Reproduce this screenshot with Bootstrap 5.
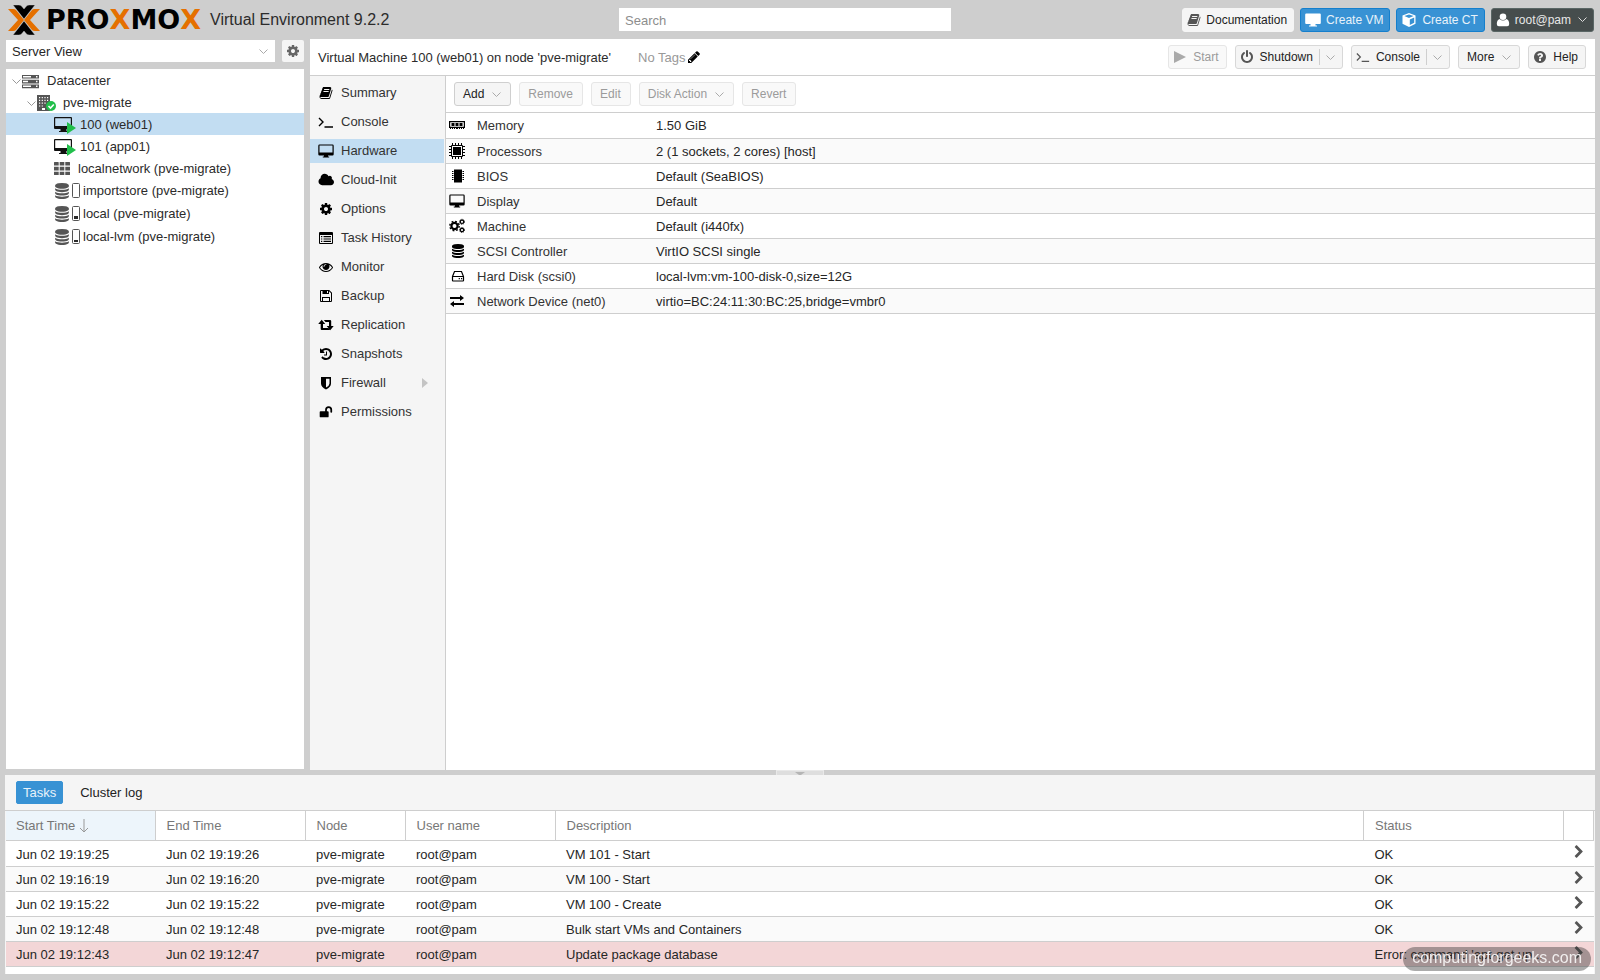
<!DOCTYPE html>
<html lang="en">
<head>
<meta charset="utf-8">
<meta name="viewport" content="width=device-width, initial-scale=1">
<title>pve-migrate - Proxmox Virtual Environment</title>
<link href="https://cdn.jsdelivr.net/npm/bootstrap@5.3.0/dist/css/bootstrap.min.css" rel="stylesheet">
<style>
body{background:#cecece;color:#2b2b2b;font-family:"Liberation Sans",Arial,sans-serif;font-size:13px;line-height:18px}
svg{display:block;flex:none;fill:currentColor}
.ic{width:14px;height:14px}
.ic-s{width:16px;height:16px}
.chev{width:9px;height:9px;fill:none;stroke:#aaa;stroke-width:1}
.topbar{height:39px;padding:0 6px 0 7px}
.wordmark{font:bold 27px/30px "DejaVu Sans",sans-serif;color:#000;padding-left:5px}
.wordmark b{color:#e57000}
.product{font-size:16px;margin-left:9px}
.side-space{flex:612 1 0;min-width:0}
.side-end{flex-grow:643;gap:6px}
.search-box{width:332px;height:23px;border:0;border-radius:0;padding:1px 6px 0;font-size:13px;flex:none}
.search-box::placeholder{color:#8d8d8d}
.tool{--bs-btn-font-size:12px;--bs-btn-line-height:16px;--bs-btn-padding-x:8px;--bs-btn-padding-y:3px;--bs-btn-border-radius:3px;--bs-btn-color:#222;--bs-btn-bg:#f5f5f5;--bs-btn-border-color:#d8d8d8;--bs-btn-hover-bg:#e8e8e8;--bs-btn-disabled-bg:#f9f9f9;--bs-btn-disabled-color:#9b9b9b;--bs-btn-disabled-border-color:#e6e6e6;--bs-btn-disabled-opacity:1;height:24px;display:inline-flex;align-items:center;gap:6px;white-space:nowrap}
.tool .ic,.tool .ic-s{color:#555}
.tool:disabled .ic{color:#aaa}
.tool .chev{margin-left:2px}
.tool .rule+.chev{margin-left:0}
.tool-lead{padding-left:4px}
.topbar .tool{gap:5px;padding-right:6px}
.tool-plain{--bs-btn-border-color:#f5f5f5}
.tool-blue{--bs-btn-bg:#3892d4;--bs-btn-border-color:#157fcc;--bs-btn-color:#e8f2fa;--bs-btn-hover-bg:#2f80bd}
.tool-dark{--bs-btn-bg:#464d4d;--bs-btn-border-color:#5a6665;--bs-btn-color:#e8e8e8;--bs-btn-hover-bg:#333}
.tool-blue .ic-s,.tool-dark .ic{color:#fff}
.tool-dark .chev{stroke:#ddd}
.tool-add{--bs-btn-border-color:#cfcfcf}
.title-bar .tool-lead{padding-right:7px}
.tools .tool{padding-right:9px}
.rule{width:1px;height:16px;background:#cfcfcf}
.work{gap:6px;padding:0 5px 0 6px;flex:1 1 auto}
.left{width:298px;padding:1px 0 1px;gap:7px}
.view-row{gap:7px}
.view-pick{display:grid;align-items:center;flex:1}
.view-pick>*{grid-area:1/1}
.view-pick select{appearance:none;border:0;background:#fff;height:22px;padding:2px 6px 0;color:#262626;width:100%}
.view-pick svg{justify-self:end;margin-right:7px;pointer-events:none}
.gear{width:22px;height:22px;border:0;border-radius:2px;background:#f5f5f5;color:#666}
.tree,.main{background:#fff}
.node{height:22px;white-space:nowrap;padding:2px 0 0 6px}
.node .chev{stroke:#999;margin-right:1px}
.node .pic{color:#555}
.lv1{padding-left:21px}
.lv1 .pic{margin-right:6px}
.lv2{padding-left:48px}
.store{height:23px;gap:2px;padding-top:0}
.picked{background:#c2ddf2}
.title-bar{height:37px;border-bottom:1px solid #cecece;padding:0 9px 0 8px;gap:0 1px}
.title-text{padding-top:1px}
.tags{color:#999;margin-left:26px}
.menu{width:136px;background:#f5f5f5;border-right:1px solid #cecece;padding:5px 1px 0 0}
.menu a{display:flex;align-items:center;height:24px;margin-bottom:5px;padding-left:8px;gap:7px;color:#333;text-decoration:none}
.menu svg{width:16px;height:16px;color:#000}
.menu svg.m{width:14px;height:14px;margin:0 1px}
.menu svg.more{width:6px;height:10px;color:#c4c4c4}
.tools{height:37px;border-bottom:1px solid #cecece;padding:0 8px;gap:8px}
.data-grid{table-layout:fixed;margin:0;--bs-table-bg:transparent}
.data-grid.table>:not(caption)>*>*{padding:2px 0 0 10px;height:25px;border-bottom:1px solid #cecece;box-shadow:none;vertical-align:middle;white-space:nowrap;overflow:hidden;text-overflow:ellipsis;font-weight:400;color:#262626;text-align:left}
.data-grid tbody tr:nth-child(even){background:#fafafa}
.log.table>tbody>tr:first-child>*{height:26px}
.hw.table>:not(caption)>*>*:first-child{padding:0 0 0 3px;color:#000}
.hw.table>:not(caption)>*>*:nth-child(2){padding-left:0;color:#333}
.hw svg{width:16px;height:16px}
.hw svg.m{width:14px;height:14px;margin-left:2px}
.log.table>:not(caption)>*>*:nth-child(n+2){padding-left:11px}
.log.table>thead>tr>*{height:30px!important;color:#777!important;border-right:1px solid #cecece}
.log.table>tbody>tr>*:last-child{padding:0 0 0 8px}
.log .sorted{background:#edf5fb}
.log tbody tr.failed{background:#f3d6d7}
.log td svg{color:#555;margin-bottom:3px}
.splitter{height:5px}
.grip{width:48px;height:5px;border:1px solid #e9e9e9;border-bottom:0;background:#dedede;padding:0}
.bottom{margin:0 5px 6px;background:#f5f5f5}
.tabs{height:36px;padding:0 11px;border-bottom:1px solid #cecece;gap:10px}
.tab{--bs-btn-font-size:13px;--bs-btn-line-height:18px;--bs-btn-padding-x:6px;--bs-btn-padding-y:2px;--bs-btn-border-radius:2px;--bs-btn-color:#222;height:23px}
.tab.on{background:#3892d4;border-color:#3892d4;color:#e8f2fa}
.log-body{background:#fff;margin:0 1px;padding-bottom:7px}
.stamp{position:fixed;right:9px;bottom:9px;height:24px;border-radius:12px;padding:0 9px;background:rgba(45,45,45,.4);color:#f1eeee;font-size:16px;line-height:22px}
</style>
</head>
<body class="d-flex flex-column min-vh-100">
<svg width="0" height="0" class="position-absolute" aria-hidden="true">
<symbol id="down" viewBox="0 0 9 9"><path d="M.5 2.5l4 4 4-4"/></symbol>
<symbol id="book" viewBox="0 0 1792 1792"><path d="M1703 478q40 57 18 129l-275 906q-19 64-76.5 107.5t-122.5 43.5h-923q-77 0-148.5-53.5t-99.5-131.5q-24-67-2-127 0-4 3-27t4-37q1-8-3-21.5t-3-19.5q2-11 8-21t16.5-23.5 16.5-23.5q23-38 45-91.5t30-91.5q3-10 .5-30t-.5-28q3-11 17-28t17-23q21-36 42-92t25-90q1-9-2.5-32t.5-28q4-13 22-30.5t22-22.5q19-26 42.5-84.5t27.5-96.5q1-8-3-25.5t-2-26.5q2-8 9-18t18-23 17-21q8-12 16.5-30.5t15-35 16-36 19.5-32 26.5-23.5 36-11.5 47.5 5.5l-1 3q38-9 51-9h761q74 0 114 56t18 130l-274 906q-36 119-71.5 153.5t-128.5 34.5h-869q-27 0-38 15-11 16-1 43 24 70 144 70h923q29 0 56-15.5t35-41.5l300-987q7-22 5-57 38 15 59 43zm-1064 2q-4 13 2 22.5t20 9.5h608q13 0 25.5-9.5t16.5-22.5l21-64q4-13-2-22.5t-20-9.5h-608q-13 0-25.5 9.5t-16.5 22.5zm-83 256q-4 13 2 22.5t20 9.5h608q13 0 25.5-9.5t16.5-22.5l21-64q4-13-2-22.5t-20-9.5h-608q-13 0-25.5 9.5t-16.5 22.5z"/></symbol>
<symbol id="cog" viewBox="0 0 1792 1792"><path d="M1152 896q0-106-75-181t-181-75-181 75-75 181 75 181 181 75 181-75 75-181zm512-109v222q0 12-8 23t-20 13l-185 28q-19 54-39 91 35 50 107 138 10 12 10 25t-9 23q-27 37-99 108t-94 71q-12 0-26-9l-138-108q-44 23-91 38-16 136-29 186-7 28-36 28h-222q-14 0-24.5-8.5t-11.5-21.5l-28-184q-49-16-90-37l-141 107q-10 9-25 9-14 0-25-11-126-114-165-168-7-10-7-23 0-12 8-23 15-21 51-66.5t54-70.5q-27-50-41-99l-183-27q-13-2-21-12.5t-8-23.5v-222q0-12 8-23t19-13l186-28q14-46 39-92-40-57-107-138-10-12-10-24 0-10 9-23 26-36 98.5-107.5t94.5-71.5q13 0 26 10l138 107q44-23 91-38 16-136 29-186 7-28 36-28h222q14 0 24.5 8.5t11.5 21.5l28 184q49 16 90 37l142-107q9-9 24-9 13 0 25 10 129 119 165 170 7 8 7 22 0 12-8 23-15 21-51 66.5t-54 70.5q26 50 41 98l183 28q13 2 21 12.5t8 23.5z"/></symbol>
<symbol id="power" viewBox="0 0 1792 1792"><path d="M1664 896q0 156-61 298t-164 245-245 164-298 61-298-61-245-164-164-245-61-298q0-182 80.5-343t226.5-270q43-32 95.5-25t83.5 50q32 42 24.5 94.5t-49.5 84.5q-98 74-151.5 181t-53.5 228q0 104 40.5 198.5t109.5 163.5 163.5 109.5 198.5 40.5 198.5-40.5 163.5-109.5 109.5-163.5 40.5-198.5q0-121-53.5-228t-151.5-181q-42-32-49.5-84.5t24.5-94.5q31-43 84-50t95 25q146 109 226.5 270t80.5 343zm-640-768v640q0 52-38 90t-90 38-90-38-38-90v-640q0-52 38-90t90-38 90 38 38 90z"/></symbol>
<symbol id="help" viewBox="0 0 1792 1792"><path d="M1024 1376v-192q0-14-9-23t-23-9h-192q-14 0-23 9t-9 23v192q0 14 9 23t23 9h192q14 0 23-9t9-23zm256-672q0-88-55.5-163t-138.5-116-170-41q-243 0-371 213-15 24 8 42l132 100q7 6 19 6 16 0 25-12 53-68 86-92 34-24 86-24 48 0 85.5 26t37.5 59q0 38-20 61t-68 45q-63 28-115.5 86.5t-52.5 125.5v36q0 14 9 23t23 9h192q14 0 23-9t9-23q0-19 21.5-49.5t54.5-49.5q32-18 49-28.5t46-35 44.5-48 28-60.5 12.5-81zm384 192q0 209-103 385.5t-279.5 279.5-385.5 103-385.5-103-279.5-279.5-103-385.5 103-385.5 279.5-279.5 385.5-103 385.5 103 279.5 279.5 103 385.5z"/></symbol>
<symbol id="db" viewBox="0 0 1792 1792"><path d="M896 768q237 0 443-43t325-127v170q0 69-103 128t-280 93.5-385 34.5-385-34.5-280-93.5-103-128v-170q119 84 325 127t443 43zm0 768q237 0 443-43t325-127v170q0 69-103 128t-280 93.5-385 34.5-385-34.5-280-93.5-103-128v-170q119 84 325 127t443 43zm0-384q237 0 443-43t325-127v170q0 69-103 128t-280 93.5-385 34.5-385-34.5-280-93.5-103-128v-170q119 84 325 127t443 43zm0-1152q208 0 385 34.5t280 93.5 103 128v128q0 69-103 128t-280 93.5-385 34.5-385-34.5-280-93.5-103-128v-128q0-69 103-128t280-93.5 385-34.5z"/></symbol>
<symbol id="cloud" viewBox="0 0 1984 1792"><path d="M1984 1152q0 159-112.5 271.5t-271.5 112.5h-1088q-185 0-316.5-131.5t-131.5-316.5q0-132 71-241.5t187-163.5q-2-28-2-43 0-212 150-362t362-150q158 0 286.5 88t187.5 230q70-62 166-62 106 0 181 75t75 181q0 75-41 138 129 30 213 134.5t84 239.5z"/></symbol>
<symbol id="pencil" viewBox="0 0 1792 1792"><path d="M491 1536l91-91-235-235-91 91v107h128v128h107zm523-928q0-22-22-22-10 0-17 7l-542 542q-7 7-7 17 0 22 22 22 10 0 17-7l542-542q7-7 7-17zm-54-192l416 416-832 832h-416v-416zm683 96q0 53-37 90l-166 166-416-416 166-165q36-38 90-38 53 0 91 38l235 234q37 39 37 91z"/></symbol>
<symbol id="history" viewBox="0 0 1792 1792"><path d="M1664 896q0 156-61 298t-164 245-245 164-298 61q-172 0-327-72.5t-264-204.5q-7-10-6.5-22.5t8.5-20.5l137-138q10-9 25-9 16 2 23 12 73 95 179 147t225 52q104 0 198.5-40.5t163.5-109.5 109.5-163.5 40.5-198.5-40.5-198.5-109.5-163.5-163.5-109.5-198.5-40.5q-98 0-188 35.5t-160 101.5l137 138q31 30 14 69-17 40-59 40h-448q-26 0-45-19t-19-45v-448q0-42 40-59 39-17 69 14l130 129q107-101 244.5-156.5t284.5-55.5q156 0 298 61t245 164 164 245 61 298zm-640-288v448q0 14-9 23t-23 9h-320q-14 0-23-9t-9-23v-64q0-14 9-23t23-9h224v-352q0-14 9-23t23-9h64q14 0 23 9t9 23z"/></symbol>
<symbol id="eye" viewBox="0 0 1792 1792"><path d="M1664 960q-152-236-381-353 61 104 61 225 0 185-131.5 316.5t-316.5 131.5-316.5-131.5-131.5-316.5q0-121 61-225-229 117-381 353 133 205 333.5 326.5t434.5 121.5 434.5-121.5 333.5-326.5zm-720-384q0-20-14-34t-34-14q-125 0-214.5 89.5t-89.5 214.5q0 20 14 34t34 14 34-14 14-34q0-86 61-147t147-61q20 0 34-14t14-34zm848 384q0 34-20 69-140 230-376.5 368.5t-499.5 138.5-499.5-139-376.5-368q-20-35-20-69t20-69q140-229 376.5-368t499.5-139 499.5 139 376.5 368q20 35 20 69z"/></symbol>
<symbol id="right" viewBox="0 0 1792 1792"><path d="M1363 877l-742 742q-19 19-45 19t-45-19l-166-166q-19-19-19-45t19-45l531-531-531-531q-19-19-19-45t19-45l166-166q19-19 45-19t45 19l742 742q19 19 19 45t-19 45z"/></symbol>
<symbol id="screen" viewBox="0 0 16 16"><path fill-rule="evenodd" d="M1.500 1.500h13a1.200 1.200 0 0 1 1.200 1.200v8.600a1.200 1.200 0 0 1-1.200 1.200H10v1h1.200v1H4.800v-1H6v-1H1.500a1.200 1.200 0 0 1-1.200-1.200V2.700a1.200 1.200 0 0 1 1.200-1.200zm0 1v7h13v-7z"/></symbol>
<symbol id="screen-solid" viewBox="0 0 16 16"><path d="M1.200 1.500h13.600q1 0 1 1V11q0 1-1 1H10.500v1.500h1.500v1H4v-1h1.500V12H1.200q-1 0-1-1V2.500q0-1 1-1z"/></symbol>
<symbol id="term" viewBox="0 0 16 16"><path d="M1 4l4 4-4 4M6.500 13H15" fill="none" stroke="currentColor" stroke-width="1.400"/></symbol>
<symbol id="list" viewBox="0 0 16 16"><path fill-rule="evenodd" d="M2 2h12q1 0 1 1v10q0 1-1 1H2q-1 0-1-1V3q0-1 1-1zm0 3v8h12V5zm1 1h1.300v1.200H3zm2.500 0H13v1.200H5.500zM3 8.400h1.300v1.200H3zm2.500 0H13v1.200H5.500zM3 10.800h1.300V12H3zm2.500 0H13V12H5.500z"/></symbol>
<symbol id="disk" viewBox="0 0 14 14"><path fill-rule="evenodd" d="M1.200 1h9L13 3.800V12q0 1-1 1H2q-1 0-1-1V2q0-1 1-1zM2 2v10h1V8h8v4h1V4.200L10 2.200V5H3.500V2zm6 0v2h1V2zM4 9v3h6V9z"/></symbol>
<symbol id="retweet" viewBox="0 0 16 16"><path d="M3.700 2.800L7.200 7H5v4h5.200l1.700 2H3.700q-1 0-1-1V7H.2zM5.800 3H12q1.200 0 1.200 1v5h2.500l-3.500 4.200L8.700 9H11V5H7.500z"/></symbol>
<symbol id="shield" viewBox="0 0 14 14"><path fill-rule="evenodd" d="M2 1h10v6.500Q12 11 7 13.500 2 11 2 7.500zm5 1.700v8.900Q10.500 9.500 10.500 7.500V2.700z"/></symbol>
<symbol id="unlock" viewBox="0 0 16 16"><path d="M1.800 7H7V5.500a4 4 0 0 1 8 0V8q0 .8-1 .8T13 8V5.500a2 2 0 0 0-4 0V7h1q1 0 1 1v5q0 1-1 1H1.800q-1 0-1-1V8q0-1 1-1z"/></symbol>
<symbol id="cube" viewBox="0 0 16 16"><path fill-rule="evenodd" d="M8 1l6.500 2.500v8.200L8 15l-6.500-3.300V3.500zm0 1.400L3.400 4.100 8 5.900l4.600-1.800zm.8 5v5.700l4.400-2.300V5.600z"/></symbol>
<symbol id="user" viewBox="0 0 14 14"><circle cx="7" cy="3.800" r="3.300"/><path d="M3.500 6q3.500 3.200 7 0 2.700 1 2.700 5 0 2.300-2 2.300H2.800q-2 0-2-2.300 0-4 2.700-5z"/></symbol>
<symbol id="play" viewBox="0 0 14 14"><path d="M1 1l12 6-12 6z"/></symbol>
<symbol id="servers" viewBox="0 0 17 15"><path fill-rule="evenodd" d="M0 1h17v3.600H0zm1 1v1.500h8V2zm13 0v1.500h1.500V2zM0 5.800h17v3.600H0zm1 1v1.500h5V6.800zm13 0v1.500h1.500V6.800zM0 10.600h17v3.600H0zm1 1v1.500h8v-1.500zm13 0v1.500h1.500v-1.500z"/></symbol>
<symbol id="building" viewBox="0 0 20 18"><path fill-rule="evenodd" d="M0 1h13v16H0zm2 2v1.200h1.200V3zm2.700 0v1.200h1.200V3zm2.700 0v1.200h1.200V3zm2.600 0v1.200h1.200V3zM2 5.800V7h1.200V5.800zm2.700 0V7h1.200V5.800zm2.700 0V7h1.200V5.800zm2.600 0V7h1.200V5.800zM2 8.600v1.200h1.200V8.600zm2.700 0v1.200h1.200V8.600zm2.700 0v1.200h1.200V8.600zM2 11.400v1.200h1.200v-1.200zm2.700 0v1.200h1.200v-1.200zM5 14v2h3v-2z"/><circle cx="14" cy="12" r="5" fill="#21bf4b"/><path d="M11.500 12l2 2 3.300-3.500" fill="none" stroke="#fff" stroke-width="1.600"/></symbol>
<symbol id="vm" viewBox="0 0 22 18"><path fill="#111" fill-rule="evenodd" d="M1 1h16q1 0 1 1v10q0 1-1 1h-4.500v2H14v1H5v-1h1.500v-2H1q-1 0-1-1V2q0-1 1-1zm.2 1.200v7.800h15.600V2.200z"/><path fill="#21bf4b" d="M13 6l9 6-9 6z"/></symbol>
<symbol id="gridic" viewBox="0 0 16 14"><path d="M.5 0h3.700q.5 0 .5.500v3H0v-3Q0 0 .5 0zm5.200 0h4.600v3.500H5.700zm5.600 0h4.200q.5 0 .5.500v3h-4.700zM0 4.800h4.700v3.700H0zm5.700 0h4.600v3.700H5.700zm5.600 0H16v3.700h-4.700zM0 9.700h4.700v3.300H.5q-.5 0-.5-.5zm5.700 0h4.600V13H5.700zm5.600 0H16v2.800q0 .5-.5.500h-4.200z"/></symbol>
<symbol id="ram" viewBox="0 0 16 16"><path fill-rule="evenodd" d="M0 4h16v7h-1v1h-1v-1h-1v1h-1v-1h-1v1h-1v-1H9v1H7v-1H6v1H5v-1H4v1H3v-1H2v1H1v-1H0zm1.200 1.300v4.500h13.600V5.300zM2.500 6h3v3h-3zm4 0h3v3h-3zm4 0h3v3h-3z"/></symbol>
<symbol id="cpu" viewBox="0 0 16 16"><path d="M2.500 2.500h11v11h-11z" fill="none" stroke="currentColor"/><path d="M4 4h8v8H4zM3 0h1v2H3zm3 0h1v2H6zm3 0h1v2H9zm3 0h1v2h-1zM3 14h1v2H3zm3 0h1v2H6zm3 0h1v2H9zm3 0h1v2h-1zM0 3h2v1H0zm0 3h2v1H0zm0 3h2v1H0zm0 3h2v1H0zM14 3h2v1h-2zm0 3h2v1h-2zm0 3h2v1h-2zm0 3h2v1h-2z"/></symbol>
<symbol id="chip" viewBox="0 0 14 14"><path d="M3 .5h8v13H3zM1 2h1.500v1H1zm0 2h1.500v1H1zm0 2h1.500v1H1zm0 2h1.500v1H1zm0 2h1.500v1H1zM11.500 2H13v1h-1.500zm0 2H13v1h-1.500zm0 2H13v1h-1.500zm0 2H13v1h-1.500zm0 2H13v1h-1.500z"/></symbol>
<symbol id="cogs" viewBox="0 0 16 16"><g fill="none" stroke="currentColor"><circle cx="5.500" cy="8" r="3.100" stroke-width="2.200"/><circle cx="5.500" cy="8" r="4.700" stroke-width="1.400" stroke-dasharray="1.850 1.850"/><circle cx="13" cy="3.800" r="1.700" stroke-width="1.200"/><circle cx="13" cy="3.800" r="2.500" stroke-dasharray="1 1"/><circle cx="13" cy="12" r="1.700" stroke-width="1.200"/><circle cx="13" cy="12" r="2.500" stroke-dasharray="1 1"/></g></symbol>
<symbol id="hdd" viewBox="0 0 14 14"><path d="M1.500 7.500L3.500 2.500h7l2 5v4q0 .5-.5.500H2q-.5 0-.5-.5zh11" fill="none" stroke="currentColor" stroke-width="1.200"/><path d="M7.700 9h1.200v1.300H7.700zM10 9h1.200v1.300H10z"/></symbol>
<symbol id="swap" viewBox="0 0 16 16"><path d="M1 4h10V2l4 3-4 3V6H1zM15 10H5V8l-4 3 4 3v-2h10z"/></symbol>
</svg>

<header class="topbar d-flex align-items-center">
  <div class="side-space d-flex align-items-center text-nowrap">
    <svg width="34" height="30" viewBox="0 0 34 30" role="img" aria-label="Proxmox"><path fill="#e57000" d="M1 4h5q2 0 3 1l8 10-8 10q-1 1-3 1H1l10-11zM33 4h-5q-2 0-3 1l-8 10 8 10q1 1 3 1h5L23 15z"/><path fill="#000" stroke="#cecece" stroke-width=".4" d="M6 0h5.500q2 0 3 1L17 4l2.500-3q1-1 3-1H28L17 14zM6 30h5.500q2 0 3-1l2.500-3 2.500 3q1 1 3 1H28L17 16z"/></svg>
    <span class="wordmark">PRO<b>X</b>MO<b>X</b></span>
    <span class="product">Virtual Environment 9.2.2</span>
  </div>
  <input class="form-control search-box" type="search" placeholder="Search" aria-label="Search">
  <div class="side-space side-end d-flex justify-content-end">
    <button class="btn tool tool-plain tool-lead"><svg class="ic"><use href="#book"/></svg>Documentation</button>
    <button class="btn tool tool-blue tool-lead"><svg class="ic-s"><use href="#screen-solid"/></svg>Create VM</button>
    <button class="btn tool tool-blue tool-lead"><svg class="ic-s"><use href="#cube"/></svg>Create CT</button>
    <button class="btn tool tool-dark tool-lead"><svg class="ic"><use href="#user"/></svg>root@pam<svg class="chev"><use href="#down"/></svg></button>
  </div>
</header>

<div class="work d-flex">
  <aside class="left d-flex flex-column flex-shrink-0">
    <div class="view-row d-flex">
      <div class="view-pick"><select aria-label="View"><option>Server View</option><option>Folder View</option></select><svg class="chev"><use href="#down"/></svg></div>
      <button class="gear d-flex align-items-center justify-content-center p-0" aria-label="Settings"><svg class="ic"><use href="#cog"/></svg></button>
    </div>
    <nav class="tree flex-grow-1" aria-label="Resources">
      <div class="node d-flex align-items-center"><svg class="chev"><use href="#down"/></svg><svg class="pic me-2" width="17" height="15"><use href="#servers"/></svg>Datacenter</div>
      <div class="node lv1 d-flex align-items-center"><svg class="chev"><use href="#down"/></svg><svg class="pic" width="20" height="18"><use href="#building"/></svg>pve-migrate</div>
      <div class="node lv2 picked d-flex align-items-center"><svg class="me-1" width="22" height="18"><use href="#vm"/></svg>100 (web01)</div>
      <div class="node lv2 d-flex align-items-center"><svg class="me-1" width="22" height="18"><use href="#vm"/></svg>101 (app01)</div>
      <div class="node lv2 d-flex align-items-center"><svg class="pic me-2" width="16" height="14"><use href="#gridic"/></svg>localnetwork (pve-migrate)</div>
      <div class="node lv2 store d-flex align-items-center"><svg class="pic" width="16" height="16"><use href="#db"/></svg><svg width="9" height="15"><rect x=".5" y=".5" width="7" height="14" rx="1" fill="none" stroke="#555"/></svg>importstore (pve-migrate)</div>
      <div class="node lv2 store d-flex align-items-center"><svg class="pic" width="16" height="16"><use href="#db"/></svg><svg width="9" height="15"><rect x=".5" y=".5" width="7" height="14" rx="1" fill="none" stroke="#555"/><path d="M2 10h4v3H2z"/></svg>local (pve-migrate)</div>
      <div class="node lv2 store d-flex align-items-center"><svg class="pic" width="16" height="16"><use href="#db"/></svg><svg width="9" height="15"><rect x=".5" y=".5" width="7" height="14" rx="1" fill="none" stroke="#555"/><path d="M2 11h4v2H2z"/></svg>local-lvm (pve-migrate)</div>
    </nav>
  </aside>

  <main class="main d-flex flex-column flex-grow-1">
    <div class="title-bar d-flex align-items-center text-nowrap">
      <span class="title-text">Virtual Machine 100 (web01) on node 'pve-migrate'</span>
      <span class="title-text tags">No Tags</span><svg class="ic text-black"><use href="#pencil"/></svg>
      <div class="ms-auto d-flex gap-2">
        <button class="btn tool tool-lead" disabled><svg class="ic"><use href="#play"/></svg>Start</button>
        <button class="btn tool tool-lead"><svg class="ic"><use href="#power"/></svg>Shutdown<span class="rule"></span><svg class="chev"><use href="#down"/></svg></button>
        <button class="btn tool tool-lead"><svg class="ic"><use href="#term"/></svg>Console<span class="rule"></span><svg class="chev"><use href="#down"/></svg></button>
        <button class="btn tool">More<svg class="chev"><use href="#down"/></svg></button>
        <button class="btn tool tool-lead"><svg class="ic"><use href="#help"/></svg>Help</button>
      </div>
    </div>
    <div class="d-flex flex-grow-1">
      <nav class="menu flex-shrink-0">
        <a href="#"><svg class="m"><use href="#book"/></svg>Summary</a>
        <a href="#"><svg><use href="#term"/></svg>Console</a>
        <a href="#" class="picked"><svg><use href="#screen"/></svg>Hardware</a>
        <a href="#"><svg><use href="#cloud"/></svg>Cloud-Init</a>
        <a href="#"><svg class="m"><use href="#cog"/></svg>Options</a>
        <a href="#"><svg><use href="#list"/></svg>Task History</a>
        <a href="#"><svg class="m"><use href="#eye"/></svg>Monitor</a>
        <a href="#"><svg class="m"><use href="#disk"/></svg>Backup</a>
        <a href="#"><svg><use href="#retweet"/></svg>Replication</a>
        <a href="#"><svg class="m"><use href="#history"/></svg>Snapshots</a>
        <a href="#"><svg class="m"><use href="#shield"/></svg>Firewall<svg class="more ms-auto me-3" viewBox="0 0 6 10"><path d="M0 0l6 5-6 5z"/></svg></a>
        <a href="#"><svg class="m"><use href="#unlock"/></svg>Permissions</a>
      </nav>
      <section class="flex-grow-1">
        <div class="tools d-flex align-items-center">
          <button class="btn tool tool-add">Add<svg class="chev"><use href="#down"/></svg></button>
          <button class="btn tool" disabled>Remove</button>
          <button class="btn tool" disabled>Edit</button>
          <button class="btn tool" disabled>Disk Action<svg class="chev"><use href="#down"/></svg></button>
          <button class="btn tool" disabled>Revert</button>
        </div>
        <table class="table data-grid hw">
          <colgroup><col style="width:31px"><col style="width:169px"><col></colgroup>
          <tbody>
            <tr><td><svg><use href="#ram"/></svg></td><td>Memory</td><td>1.50 GiB</td></tr>
            <tr><td><svg><use href="#cpu"/></svg></td><td>Processors</td><td>2 (1 sockets, 2 cores) [host]</td></tr>
            <tr><td><svg class="m"><use href="#chip"/></svg></td><td>BIOS</td><td>Default (SeaBIOS)</td></tr>
            <tr><td><svg><use href="#screen"/></svg></td><td>Display</td><td>Default</td></tr>
            <tr><td><svg><use href="#cogs"/></svg></td><td>Machine</td><td>Default (i440fx)</td></tr>
            <tr><td><svg class="m"><use href="#db"/></svg></td><td>SCSI Controller</td><td>VirtIO SCSI single</td></tr>
            <tr><td><svg class="m"><use href="#hdd"/></svg></td><td>Hard Disk (scsi0)</td><td>local-lvm:vm-100-disk-0,size=12G</td></tr>
            <tr><td><svg><use href="#swap"/></svg></td><td>Network Device (net0)</td><td>virtio=BC:24:11:30:BC:25,bridge=vmbr0</td></tr>
          </tbody>
        </table>
      </section>
    </div>
  </main>
</div>

<div class="splitter d-flex justify-content-center"><button class="grip d-flex justify-content-center align-items-center" aria-label="Collapse log"><svg width="10" height="4"><path fill="#b5b5b5" d="M0 1h10L6 4H4z"/></svg></button></div>

<section class="bottom">
  <div class="tabs d-flex align-items-center">
    <button class="btn tab on">Tasks</button>
    <button class="btn tab">Cluster log</button>
  </div>
  <div class="log-body">
    <table class="table data-grid log">
      <colgroup><col style="width:149px"><col style="width:150px"><col style="width:100px"><col style="width:150px"><col><col style="width:200px"><col style="width:30px"></colgroup>
      <thead><tr><th class="sorted"><span class="d-flex align-items-center gap-1">Start Time<svg width="10" height="16" stroke="#999"><path d="M5 1v13M1 10l4 4 4-4" fill="none"/></svg></span></th><th>End Time</th><th>Node</th><th>User name</th><th>Description</th><th>Status</th><th aria-label="Details"></th></tr></thead>
      <tbody>
        <tr><td>Jun 02 19:19:25</td><td>Jun 02 19:19:26</td><td>pve-migrate</td><td>root@pam</td><td>VM 101 - Start</td><td>OK</td><td><svg class="ic"><use href="#right"/></svg></td></tr>
        <tr><td>Jun 02 19:16:19</td><td>Jun 02 19:16:20</td><td>pve-migrate</td><td>root@pam</td><td>VM 100 - Start</td><td>OK</td><td><svg class="ic"><use href="#right"/></svg></td></tr>
        <tr><td>Jun 02 19:15:22</td><td>Jun 02 19:15:22</td><td>pve-migrate</td><td>root@pam</td><td>VM 100 - Create</td><td>OK</td><td><svg class="ic"><use href="#right"/></svg></td></tr>
        <tr><td>Jun 02 19:12:48</td><td>Jun 02 19:12:48</td><td>pve-migrate</td><td>root@pam</td><td>Bulk start VMs and Containers</td><td>OK</td><td><svg class="ic"><use href="#right"/></svg></td></tr>
        <tr class="failed"><td>Jun 02 19:12:43</td><td>Jun 02 19:12:47</td><td>pve-migrate</td><td>root@pam</td><td>Update package database</td><td>Error: command 'apt-get up...</td><td><svg class="ic"><use href="#right"/></svg></td></tr>
      </tbody>
    </table>
  </div>
</section>
<div class="stamp">computingforgeeks.com</div>
<script src="https://cdn.jsdelivr.net/npm/bootstrap@5.3.0/dist/js/bootstrap.bundle.min.js"></script>
</body>
</html>
